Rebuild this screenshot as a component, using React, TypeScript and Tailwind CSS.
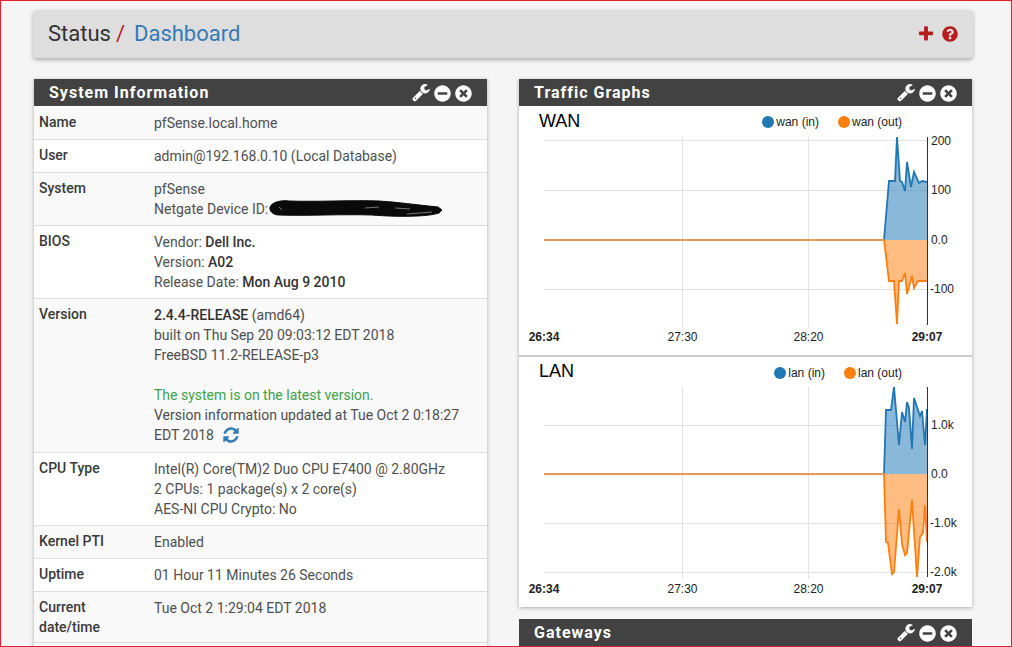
import type { ReactNode } from "react";
import { FaMinusCircle, FaQuestionCircle, FaTimesCircle } from "react-icons/fa";

const BLUE = "#1f77b4";
const ORANGE = "#ff7f0e";

// font awesome 4 glyphs, the newer set in react-icons draws these differently
function WrenchIcon() {
  return (
    <svg width="18" height="19" viewBox="0 0 1664 1792" fill="currentColor">
      <path d="M384 1344q0-26-19-45t-45-19-45 19-19 45 19 45 45 19 45-19 19-45zm644-420l-682 682q-37 37-90 37-52 0-91-37l-106-108q-38-36-38-90 0-53 38-91l681-681q39 98 114.5 173.5t173.5 114.5zm634-435q0 39-23 106-47 134-164.5 217.5t-258.5 83.5q-185 0-316.5-131.5t-131.5-316.5 131.5-316.5 316.5-131.5q58 0 121.5 16.5t107.5 46.5q16 11 16 28t-16 28l-293 169v224l193 107q5-3 79-48.5t135.5-81 70.5-35.5q15 0 23.5 10t8.5 25z" />
    </svg>
  );
}

function PlusIcon() {
  return (
    <svg width="18" height="18" viewBox="0 0 1792 1792" fill="currentColor">
      <path d="M1600 736v192q0 40-28 68t-68 28h-416v416q0 40-28 68t-68 28h-192q-40 0-68-28t-28-68v-416h-416q-40 0-68-28t-28-68v-192q0-40 28-68t68-28h416v-416q0-40 28-68t68-28h192q40 0 68 28t28 68v416h416q40 0 68 28t28 68z" />
    </svg>
  );
}

function RefreshIcon() {
  return (
    <svg width="18" height="18" viewBox="0 0 1792 1792" fill="currentColor" className="ml-[8px] text-[#337ab7]">
      <path d="M1639 1056q0 5-1 7-64 268-268 434.5t-478 166.5q-146 0-282.5-55t-243.5-157l-129 129q-19 19-45 19t-45-19-19-45v-448q0-26 19-45t45-19h448q26 0 45 19t19 45-19 45l-137 137q71 66 161 102t187 36q134 0 250-65t186-179q11-17 53-117 8-23 30-23h192q13 0 22.5 9.5t9.5 22.5zm25-800v448q0 26-19 45t-45 19h-448q-26 0-45-19t-19-45 19-45l138-138q-148-137-349-137-134 0-250 65t-186 179q-11 17-53 117-8 23-30 23h-199q-13 0-22.5-9.5t-9.5-22.5v-7q65-268 270-434.5t480-166.5q146 0 284 55.5t245 156.5l130-129q19-19 45-19t45 19 19 45z" />
    </svg>
  );
}

function PanelHeader({ title }: { title: string }) {
  return (
    <div className="flex h-[27px] items-center justify-between bg-[#424242] px-[15px] pt-[1px] text-white">
      <h2 className="text-[16px] leading-[26px] font-bold tracking-[1px]">{title}</h2>
      <div className="flex items-center gap-[4px]">
        <WrenchIcon />
        <FaMinusCircle size={17} />
        <FaTimesCircle size={17} />
      </div>
    </div>
  );
}

function Row({ label, children, striped, tall }: { label: ReactNode; children: ReactNode; striped?: boolean; tall?: boolean }) {
  return (
    <div className={`flex border-b border-[#ddd] pl-[5px] ${striped ? "bg-[#f9f9f9]" : "bg-white"} ${tall ? "h-[51px]" : ""}`}>
      <div className="w-[115px] shrink-0 pt-[5px] pb-[7px] font-medium text-[#3a3a3a]">{label}</div>
      <div className="pt-[6px] pb-[6px] text-[#4f4f4f]">{children}</div>
    </div>
  );
}

function Scribble() {
  return (
    <svg width="178" height="20" viewBox="0 0 178 20" className="-ml-[1px]">
      <path d="M3 8 C5 3 14 1 22 2 C50 3 85 1 112 2 C130 3 150 6 171 8 L175 11 L172 14 C160 18 130 18 105 16 C75 15 40 17 12 16 C6 16 2 12 3 8Z" fill="#0a0a0a" stroke="#0a0a0a" />
      <path d="M98 9 L112 8 M128 9 L143 10 M140 15 L165 13 M12 8 L15 11" fill="none" stroke="#fff" strokeOpacity="0.55" strokeWidth="0.8" />
    </svg>
  );
}

function SystemInfo() {
  return (
    <section className="bg-white shadow-[0_1px_4px_rgba(0,0,0,0.3)]">
      <PanelHeader title="System Information" />
      <div className="pt-[1px] text-[14px] leading-[20px]">
        <Row label="Name" striped>pfSense.local.home</Row>
        <Row label="User">admin@192.168.0.10 (Local Database)</Row>
        <Row label="System" striped>
          pfSense
          <div className="flex items-center">
            Netgate Device ID:
            <Scribble />
          </div>
        </Row>
        <Row label="BIOS">
          <div>Vendor: <b className="font-medium text-[#333]">Dell Inc.</b></div>
          <div>Version: <b className="font-medium text-[#333]">A02</b></div>
          <div>Release Date: <b className="font-medium text-[#333]">Mon Aug 9 2010</b></div>
        </Row>
        <Row label="Version" striped>
          <div><b className="font-medium text-[#333]">2.4.4-RELEASE</b> (amd64)</div>
          <div>built on Thu Sep 20 09:03:12 EDT 2018</div>
          <div>FreeBSD 11.2-RELEASE-p3</div>
          <div className="h-[20px]" />
          <div className="text-[#3fa24a]">The system is on the latest version.</div>
          <div>Version information updated at Tue Oct 2 0:18:27</div>
          <div className="flex items-center pb-[1px]">
            EDT 2018
            <RefreshIcon />
          </div>
        </Row>
        <Row label="CPU Type">
          <div>Intel(R) Core(TM)2 Duo CPU E7400 @ 2.80GHz</div>
          <div>2 CPUs: 1 package(s) x 2 core(s)</div>
          <div>AES-NI CPU Crypto: No</div>
        </Row>
        <Row label="Kernel PTI" striped>Enabled</Row>
        <Row label="Uptime">01 Hour 11 Minutes 26 Seconds</Row>
        <Row label={<>Current<br />date/time</>} striped tall>Tue Oct 2 1:29:04 EDT 2018</Row>
        <div className="h-[20px] bg-white" />
      </div>
    </section>
  );
}

type Pt = [number, number];

function toLine(pts: Pt[]) {
  return pts.map((p) => p.join(",")).join(" ");
}

function Chart({
  box,
  zero,
  top,
  bottom,
  grid,
  ticks,
  timeY,
  inPts,
  outPts,
}: {
  box: string;
  zero: number;
  top: number;
  bottom: number;
  grid: number[];
  ticks: [string, number][];
  timeY: number;
  inPts: Pt[];
  outPts: Pt[];
}) {
  const flat: Pt[] = [[544, zero], [884, zero]];
  return (
    <svg viewBox={box} className="block w-full" style={{ fontFamily: '"Liberation Sans", Arial, sans-serif' }}>
      {grid.map((y) => (
        <line key={y} x1="544" x2="927" y1={y + 0.5} y2={y + 0.5} stroke="#e3e3e3" />
      ))}
      {[682.5, 808.5].map((x) => (
        <line key={x} x1={x} x2={x} y1={top} y2={bottom + 2} stroke="#e3e3e3" />
      ))}
      <polygon points={`884,${zero} ${toLine(inPts)} 927,${zero}`} fill={BLUE} fillOpacity="0.52" />
      <polygon points={`884,${zero} ${toLine(outPts)} 927,${zero}`} fill={ORANGE} fillOpacity="0.52" />
      <polyline points={toLine([...flat, ...inPts])} fill="none" stroke={BLUE} strokeWidth="1.8" />
      <polyline points={toLine([...flat, ...outPts])} fill="none" stroke={ORANGE} strokeWidth="1.8" />
      <line x1="544" x2="884" y1={zero} y2={zero} stroke="#e8985a" strokeWidth="2" />
      <line x1="927.5" x2="927.5" y1={top} y2={bottom} stroke="#333" />
      <g fontSize="12" fill="#222">
        {ticks.map(([t, y]) => (
          <text key={t} x={t.startsWith("-") ? 930 : 931} y={y + 4}>{t}</text>
        ))}
        <text x="544" y={timeY} textAnchor="middle" fontWeight="bold">26:34</text>
        <text x="682.5" y={timeY} textAnchor="middle">27:30</text>
        <text x="808.5" y={timeY} textAnchor="middle">28:20</text>
        <text x="927" y={timeY} textAnchor="middle" fontWeight="bold">29:07</text>
      </g>
    </svg>
  );
}

function GraphHead({ name, legendIn, legendOut, nudge }: { name: string; legendIn: string; legendOut: string; nudge: string }) {
  return (
    <div className="flex h-[24px] items-start justify-between pr-[70px] pl-[20px] font-['Liberation_Sans',Arial,sans-serif] text-black">
      <h3 className={`text-[18px] leading-[22px] ${nudge}`}>{name}</h3>
      <div className="flex items-center gap-[19px] pt-[8px] text-[12px] leading-[16px] text-[#222]">
        <span className="flex items-center gap-[2px]">
          <i className="size-[12px] rounded-full bg-[#1f77b4]" />
          {legendIn}
        </span>
        <span className="flex items-center gap-[2px]">
          <i className="size-[12px] rounded-full bg-[#ff7f0e]" />
          {legendOut}
        </span>
      </div>
    </div>
  );
}

function TrafficGraphs() {
  return (
    <section className="bg-white shadow-[0_1px_4px_rgba(0,0,0,0.3)]">
      <PanelHeader title="Traffic Graphs" />
      <div className="border-b-2 border-[#ccc]">
        <GraphHead name="WAN" legendIn="wan (in)" legendOut="wan (out)" nudge="pt-[4px]" />
        <Chart
          box="519 130 453 225"
          zero={240}
          top={137}
          bottom={325}
          grid={[140, 190, 289]}
          ticks={[["200", 141], ["100", 190], ["0.0", 240], ["-100", 289]]}
          timeY={341}
          inPts={[[884, 240], [889, 181], [895, 181], [897, 137], [900, 181], [902, 182], [905, 191], [907, 162], [911, 187], [914, 172], [919, 183], [922, 181], [927, 182]]}
          outPts={[[884, 240], [889, 281], [894, 281], [897, 324], [899, 281], [902, 281], [905, 273], [907, 294], [912, 276], [914, 288], [918, 281], [927, 281]]}
        />
      </div>
      <GraphHead name="LAN" legendIn="lan (in)" legendOut="lan (out)" nudge="pt-[3px]" />
      <Chart
        box="519 381 453 226"
        zero={474}
        top={387}
        bottom={577}
        grid={[425, 523, 572]}
        ticks={[["1.0k", 425], ["0.0", 474], ["-1.0k", 523], ["-2.0k", 572]]}
        timeY={593}
        inPts={[[884, 474], [886, 410], [891, 410], [894, 387], [899, 445], [902, 412], [905, 422], [907, 402], [909, 408], [912, 449], [914, 398], [920, 416], [922, 411], [925, 445], [927, 409]]}
        outPts={[[884, 474], [886, 542], [888, 543], [892, 574], [894, 572], [899, 509], [902, 544], [905, 555], [907, 553], [912, 500], [917, 577], [920, 537], [923, 533], [925, 505], [927, 542]]}
      />
    </section>
  );
}

export default function App() {
  return (
    <div className="h-[647px] w-[1012px] overflow-hidden border border-[#e0202a] bg-[#f5f5f5] pt-[9px] pl-[32px] font-['Roboto',sans-serif]">
      <div className="flex h-[48px] w-[940px] items-center justify-between rounded-[4px] bg-[#dedede] px-[15px] shadow-[0_2px_4px_rgba(0,0,0,0.3)]">
        <h1 className="text-[22px] leading-[48px] text-[#333]">
          Status<span className="ml-[5px] text-[#b71c1c]">/</span>
          <span className="ml-[9px] text-[#337ab7]">Dashboard</span>
        </h1>
        <div className="flex items-center gap-[7px] text-[#b71c1c]">
          <PlusIcon />
          <FaQuestionCircle size={16} />
        </div>
      </div>
      <div className="mt-[21px] ml-[1px] grid w-[938px] grid-cols-[453px_453px] gap-x-[32px]">
        <SystemInfo />
        <div className="flex flex-col gap-[12px]">
          <TrafficGraphs />
          <section className="bg-white">
            <PanelHeader title="Gateways" />
          </section>
        </div>
      </div>
    </div>
  );
}
